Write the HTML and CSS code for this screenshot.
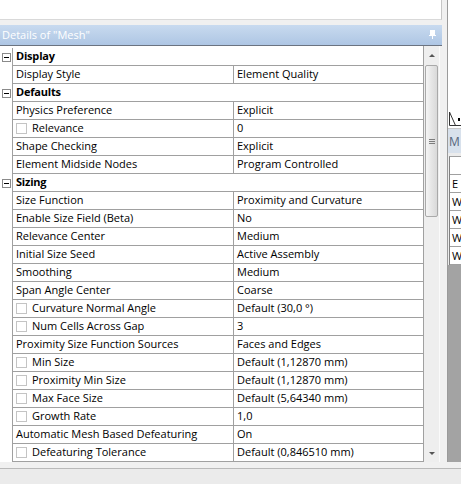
FILE: index.html
```html
<!DOCTYPE html>
<html lang="en">
<head>
    <meta charset="UTF-8">
    <title>Details of "Mesh"</title>
    <link rel="stylesheet" href="styles.css">
</head>
<body>
    <div class="workspace">
        <div class="main">
            <!-- Outline pane (cut off above) -->
            <div class="tree-pane"></div>

            <!-- Details view -->
            <div class="titlebar">
                <span>Details of "Mesh"</span>
                <svg class="pin" width="7" height="9" viewBox="0 0 7 9">
                    <rect x="1.5" y="0.5" width="4" height="4" fill="#fff" stroke="#fff"/>
                    <line x1="0" y1="5.5" x2="7" y2="5.5" stroke="#fff"/>
                    <line x1="3.5" y1="6" x2="3.5" y2="9" stroke="#fff"/>
                </svg>
            </div>
            <div class="details-body">
                <div class="grid">
                    <div class="row section"><div class="gutter"><span class="toggle"></span></div><div class="label">Display</div></div>
                    <div class="row"><div class="gutter"></div><div class="name">Display Style</div><div class="value">Element Quality</div></div>

                    <div class="row section"><div class="gutter"><span class="toggle"></span></div><div class="label">Defaults</div></div>
                    <div class="row"><div class="gutter"></div><div class="name">Physics Preference</div><div class="value">Explicit</div></div>
                    <div class="row"><div class="gutter"></div><div class="name"><span class="check"></span>Relevance</div><div class="value">0</div></div>
                    <div class="row"><div class="gutter"></div><div class="name">Shape Checking</div><div class="value">Explicit</div></div>
                    <div class="row"><div class="gutter"></div><div class="name">Element Midside Nodes</div><div class="value">Program Controlled</div></div>

                    <div class="row section"><div class="gutter"><span class="toggle"></span></div><div class="label">Sizing</div></div>
                    <div class="row"><div class="gutter"></div><div class="name">Size Function</div><div class="value">Proximity and Curvature</div></div>
                    <div class="row"><div class="gutter"></div><div class="name">Enable Size Field (Beta)</div><div class="value">No</div></div>
                    <div class="row"><div class="gutter"></div><div class="name">Relevance Center</div><div class="value">Medium</div></div>
                    <div class="row"><div class="gutter"></div><div class="name">Initial Size Seed</div><div class="value">Active Assembly</div></div>
                    <div class="row"><div class="gutter"></div><div class="name">Smoothing</div><div class="value">Medium</div></div>
                    <div class="row"><div class="gutter"></div><div class="name">Span Angle Center</div><div class="value">Coarse</div></div>
                    <div class="row"><div class="gutter"></div><div class="name"><span class="check"></span>Curvature Normal Angle</div><div class="value">Default (30,0 °)</div></div>
                    <div class="row"><div class="gutter"></div><div class="name"><span class="check"></span>Num Cells Across Gap</div><div class="value">3</div></div>
                    <div class="row"><div class="gutter"></div><div class="name">Proximity Size Function Sources</div><div class="value">Faces and Edges</div></div>
                    <div class="row"><div class="gutter"></div><div class="name"><span class="check"></span>Min Size</div><div class="value">Default (1,12870 mm)</div></div>
                    <div class="row"><div class="gutter"></div><div class="name"><span class="check"></span>Proximity Min Size</div><div class="value">Default (1,12870 mm)</div></div>
                    <div class="row"><div class="gutter"></div><div class="name"><span class="check"></span>Max Face Size</div><div class="value">Default (5,64340 mm)</div></div>
                    <div class="row"><div class="gutter"></div><div class="name"><span class="check"></span>Growth Rate</div><div class="value">1,0</div></div>
                    <div class="row"><div class="gutter"></div><div class="name">Automatic Mesh Based Defeaturing</div><div class="value">On</div></div>
                    <div class="row"><div class="gutter"></div><div class="name"><span class="check"></span>Defeaturing Tolerance</div><div class="value">Default (0,846510 mm)</div></div>
                </div>

                <div class="scrollbar">
                    <div class="arrow up"></div>
                    <div class="thumb">
                        <svg width="6" height="5" viewBox="0 0 6 5">
                            <path d="M0 0.5H6M0 2.5H6M0 4.5H6" stroke="#7d7d7d"/>
                        </svg>
                    </div>
                    <div class="track"></div>
                    <div class="arrow down"></div>
                </div>
            </div>
        </div>

        <!-- Graphics window and its table, cut off on the right -->
        <div class="side">
            <div class="viewport">
                <svg width="13" height="16" viewBox="0 0 13 16">
                    <path d="M1.5 1V14.5H13M1.5 1L7.5 14.5" stroke="#333" fill="none"/>
                    <rect x="10" y="7" width="2" height="3" fill="#000"/>
                </svg>
            </div>
            <div class="side-header">M</div>
            <div class="side-table">
                <div class="side-row"></div>
                <div class="side-row">E</div>
                <div class="side-row">W</div>
                <div class="side-row">W</div>
                <div class="side-row">W</div>
                <div class="side-row">W</div>
            </div>
            <div class="side-fill"></div>
        </div>
    </div>
    <div class="statusbar"></div>
</body>
</html>
```

FILE: styles.css
```css
/* Details view layout */
* {
    box-sizing: border-box;
}

body {
    margin: 0;
    width: 461px;
    height: 484px;
    overflow: hidden;
    background-color: #f0f0f0;
    font-family: "Open Sans", sans-serif;
    font-size: 11px;
    color: #000;
}

.workspace {
    display: flex;
    height: 462px;
}

.main {
    width: 442px;
    display: flex;
    flex-direction: column;
}

.tree-pane {
    height: 20px;
    background-color: #fff;
    border-bottom: 1px solid #d9d9d9;
    border-right: 1px solid #c6c6c6;
}

.titlebar {
    margin-top: 5px;
    height: 21px;
    padding: 0 6px 1px 2px;
    display: flex;
    align-items: center;
    justify-content: space-between;
    background: linear-gradient(#c8daef, #aec6e4);
    border-bottom: 1px solid #6b7380;
    color: #fff;
}

.details-body {
    flex: 1;
    display: flex;
    padding-right: 2px;
}

.grid {
    width: 424px;
    padding-top: 2px;
    background-color: #fff;
    border-right: 1px solid #a0a0a0;
}

.row {
    display: flex;
    height: 18px;
    white-space: nowrap;
}

.gutter {
    width: 13px;
    padding-left: 2px;
    display: flex;
    align-items: center;
    border-right: 1px solid #a0a0a0;
}

.toggle {
    position: relative;
    width: 9px;
    height: 9px;
    border: 1px solid #8a8a8a;
    background-color: #fff;
}

.toggle::after {
    content: "";
    position: absolute;
    left: 1px;
    top: 3px;
    width: 5px;
    height: 1px;
    background-color: #000;
}

.name,
.value,
.label {
    display: flex;
    align-items: center;
    padding: 0 0 2px 3px;
    border-bottom: 1px solid #a0a0a0;
    overflow: hidden;
}

.name {
    width: 221px;
    border-right: 1px solid #a0a0a0;
}

.value,
.label {
    flex: 1;
}

.label {
    font-weight: bold;
    letter-spacing: -0.2px;
}

.check {
    width: 11px;
    height: 11px;
    margin: 2px 5px 0 0;
    border: 1px solid #c4c4c4;
    flex-shrink: 0;
}

/* Scrollbar */
.scrollbar {
    width: 16px;
    display: flex;
    flex-direction: column;
    background-color: #eeeeee;
    border-right: 1px solid #fafafa;
}

.arrow {
    height: 19px;
    display: flex;
    align-items: center;
    justify-content: center;
}

.arrow::after {
    content: "";
    border-left: 3px solid transparent;
    border-right: 3px solid transparent;
}

.arrow.up::after {
    border-bottom: 3px solid #555;
}

.arrow.down {
    height: 18px;
}

.arrow.down::after {
    border-top: 3px solid #555;
}

.thumb {
    height: 152px;
    margin: 0 1px;
    display: flex;
    align-items: center;
    justify-content: center;
    border: 1px solid #a9a9a9;
    border-radius: 2px;
    background: linear-gradient(90deg, #f5f5f5, #e6e6e6 50%, #d9d9d9);
}

.track {
    flex: 1;
}

/* Graphics window on the right */
.side {
    flex: 1;
    margin-left: 5px;
    display: flex;
    flex-direction: column;
    border-left: 1px solid #9a9a9a;
    background-color: #ececec;
    overflow: hidden;
}

.viewport {
    height: 129px;
    display: flex;
    align-items: flex-end;
    background-color: #fff;
    border-bottom: 1px solid #c8c8c8;
    padding-bottom: 1px;
}

.side-header {
    height: 24px;
    padding-left: 1px;
    display: flex;
    align-items: center;
    background-color: #d8e1ec;
    color: #56667c;
    font-size: 12px;
}

.side-table {
    margin: 3px 0 0 1px;
    background-color: #fff;
    border-left: 1px solid #808080;
    border-top: 1px solid #a0a0a0;
}

.side-row {
    height: 18px;
    padding: 0 0 1px 2px;
    display: flex;
    align-items: center;
    white-space: nowrap;
    border-bottom: 1px solid #a0a0a0;
}

.side-fill {
    flex: 1;
    background-color: #a3a3a3;
}

.statusbar {
    height: 16px;
    margin-top: 6px;
    background-color: #ebebeb;
    border-top: 1px solid #b9b9b9;
}
```
